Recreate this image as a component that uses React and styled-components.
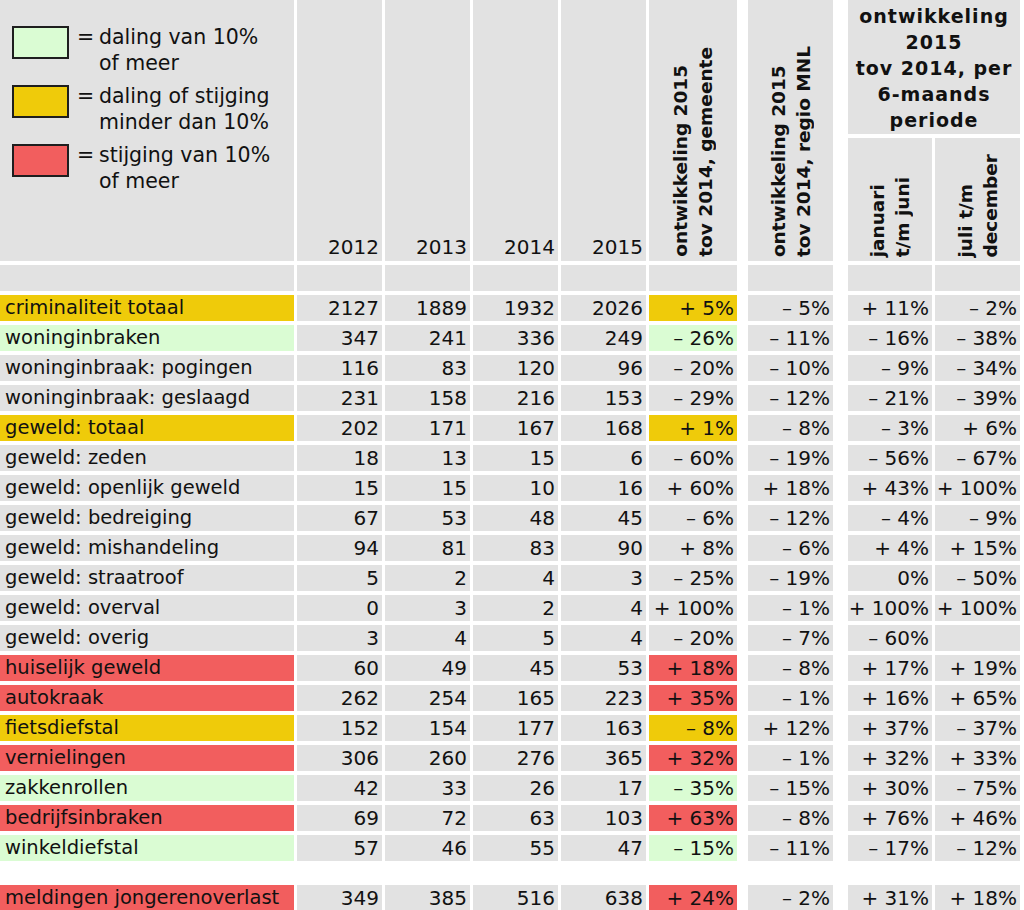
import React from 'react';
import styled, { createGlobalStyle } from 'styled-components';

// -------------- DATA -----------------

const rows = [
    ['criminaliteit totaal', 'y', ['2127', '1889', '1932', '2026', '+ 5%', '– 5%', '+ 11%', '– 2%']],
    ['woninginbraken', 'g', ['347', '241', '336', '249', '– 26%', '– 11%', '– 16%', '– 38%']],
    ['woninginbraak: pogingen', null, ['116', '83', '120', '96', '– 20%', '– 10%', '– 9%', '– 34%']],
    ['woninginbraak: geslaagd', null, ['231', '158', '216', '153', '– 29%', '– 12%', '– 21%', '– 39%']],
    ['geweld: totaal', 'y', ['202', '171', '167', '168', '+ 1%', '– 8%', '– 3%', '+ 6%']],
    ['geweld: zeden', null, ['18', '13', '15', '6', '– 60%', '– 19%', '– 56%', '– 67%']],
    ['geweld: openlijk geweld', null, ['15', '15', '10', '16', '+ 60%', '+ 18%', '+ 43%', '+ 100%']],
    ['geweld: bedreiging', null, ['67', '53', '48', '45', '– 6%', '– 12%', '– 4%', '– 9%']],
    ['geweld: mishandeling', null, ['94', '81', '83', '90', '+ 8%', '– 6%', '+ 4%', '+ 15%']],
    ['geweld: straatroof', null, ['5', '2', '4', '3', '– 25%', '– 19%', '0%', '– 50%']],
    ['geweld: overval', null, ['0', '3', '2', '4', '+ 100%', '– 1%', '+ 100%', '+ 100%']],
    ['geweld: overig', null, ['3', '4', '5', '4', '– 20%', '– 7%', '– 60%', '']],
    ['huiselijk geweld', 'r', ['60', '49', '45', '53', '+ 18%', '– 8%', '+ 17%', '+ 19%']],
    ['autokraak', 'r', ['262', '254', '165', '223', '+ 35%', '– 1%', '+ 16%', '+ 65%']],
    ['fietsdiefstal', 'y', ['152', '154', '177', '163', '– 8%', '+ 12%', '+ 37%', '– 37%']],
    ['vernielingen', 'r', ['306', '260', '276', '365', '+ 32%', '– 1%', '+ 32%', '+ 33%']],
    ['zakkenrollen', 'g', ['42', '33', '26', '17', '– 35%', '– 15%', '+ 30%', '– 75%']],
    ['bedrijfsinbraken', 'r', ['69', '72', '63', '103', '+ 63%', '– 8%', '+ 76%', '+ 46%']],
    ['winkeldiefstal', 'g', ['57', '46', '55', '47', '– 15%', '– 11%', '– 17%', '– 12%']],
];

const lastRow = ['meldingen jongerenoverlast', 'r', ['349', '385', '516', '638', '+ 24%', '– 2%', '+ 31%', '+ 18%']];

const tones = {
    g: '#dafcd3',
    y: '#efcb0a',
    r: '#f25e5e',
};

const grey = '#e2e2e2';

// -------------- CSS -----------------

const GlobalStyle = createGlobalStyle`
    body {
        margin: 0;
        background: #fff;
        font-family: "DejaVu Sans", "Liberation Sans", sans-serif;
        color: #111;
    }
`;

const Table = styled.div`
    display: grid;
    grid-template-columns: 294px repeat(4, 85px) 88px 93px 96px 85px;
    grid-template-rows: 134px 123px 26px repeat(19, 26px) 16px 26px;
    column-gap: 3px;
    row-gap: 4px;
    width: 1020px;
`;

const Legend = styled.div`
    grid-row: 1 / 3;
    background: ${grey};
    padding: 24px 0 0 12px;
    display: flex;
    flex-direction: column;
    gap: 7px;
`;

const LegendItem = styled.div`
    display: flex;
    align-items: flex-start;
    font-size: 20.5px;
    line-height: 26px;
`;

const Swatch = styled.span`
    flex: none;
    width: 53px;
    height: 29px;
    margin-top: 2px;
    border: 2px solid #1e1e1e;
    background: ${p => tones[p.$tone]};
`;

const Equals = styled.span`
    flex: none;
    width: 22px;
    margin-left: 8px;
`;

const YearHead = styled.div`
    grid-row: 1 / 3;
    background: ${grey};
    display: flex;
    align-items: flex-end;
    justify-content: flex-end;
    padding: 0 3px 2px 0;
    font-size: 20px;
    line-height: 24px;
`;

const RotHead = styled.div`
    grid-row: ${p => p.$sub ? '2' : '1 / 3'};
    margin-left: ${p => p.$lead || 0}px;
    background: ${grey};
    display: flex;
    align-items: flex-end;
    justify-content: center;
    padding-bottom: 4px;
`;

const VText = styled.div`
    writing-mode: vertical-rl;
    transform: rotate(180deg);
    white-space: nowrap;
    font-weight: bold;
    font-size: 18.5px;
    line-height: 25px;
`;

const GroupHead = styled.div`
    grid-column: 8 / 10;
    grid-row: 1;
    margin-left: 12px;
    background: ${grey};
    text-align: center;
    padding-top: 3px;
    font-weight: bold;
    font-size: 19px;
    line-height: 26px;
    letter-spacing: 1px;
`;

const Cell = styled.div`
    margin-left: ${p => p.$lead || 0}px;
    background: ${p => tones[p.$tone] || grey};
    font-size: ${p => p.$label ? 19.5 : 20}px;
    line-height: 26px;
    white-space: nowrap;
    text-align: ${p => p.$label ? 'left' : 'right'};
    padding: ${p => p.$label ? '0 0 0 5px' : '0 3px 0 0'};
    overflow: hidden;
`;

const Spacer = styled.div`
    grid-column: 1 / -1;
`;

// -------------- COMPONENT -----------------

const leads = [0, 0, 0, 0, 0, 8, 12, 0];

function DataRow({ row }) {
    const [label, tone, values] = row;
    return <>
        <Cell $label $tone={tone}>{label}</Cell>
        {values.map((v, i) =>
            <Cell key={i} $lead={leads[i]} $tone={i === 4 ? tone : null}>{v}</Cell>
        )}
    </>;
}

export default function App() {
    return (
        <>
            <GlobalStyle />
            <Table>
                <Legend>
                    <LegendItem>
                        <Swatch $tone="g" /><Equals>=</Equals>
                        <div>daling van 10%<br />of meer</div>
                    </LegendItem>
                    <LegendItem>
                        <Swatch $tone="y" /><Equals>=</Equals>
                        <div>daling of stijging<br />minder dan 10%</div>
                    </LegendItem>
                    <LegendItem>
                        <Swatch $tone="r" /><Equals>=</Equals>
                        <div>stijging van 10%<br />of meer</div>
                    </LegendItem>
                </Legend>
                {['2012', '2013', '2014', '2015'].map(y => <YearHead key={y}>{y}</YearHead>)}
                <RotHead>
                    <VText>ontwikkeling 2015<br />tov 2014, gemeente</VText>
                </RotHead>
                <RotHead $lead={8}>
                    <VText>ontwikkeling 2015<br />tov 2014, regio MNL</VText>
                </RotHead>
                <GroupHead>
                    ontwikkeling<br />2015<br />tov 2014, per<br />6-maands<br />periode
                </GroupHead>
                <RotHead $sub $lead={12}>
                    <VText>januari<br />t/m juni</VText>
                </RotHead>
                <RotHead $sub>
                    <VText>juli t/m<br />december</VText>
                </RotHead>

                {leads.concat([0]).map((l, i) => <Cell key={i} $lead={i === 0 ? 0 : leads[i - 1]} />)}

                {rows.map(r => <DataRow key={r[0]} row={r} />)}
                <Spacer />
                <DataRow row={lastRow} />
            </Table>
        </>
    );
}
